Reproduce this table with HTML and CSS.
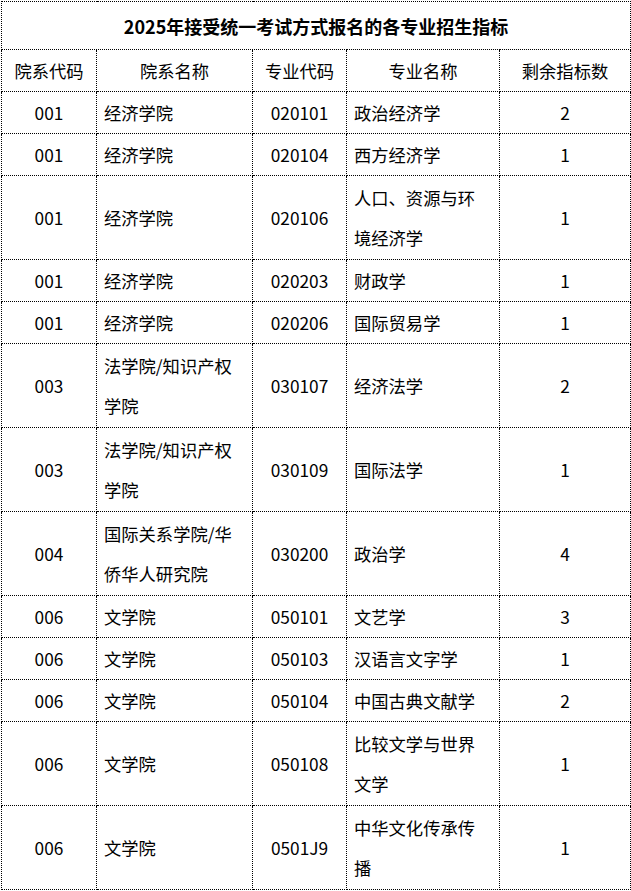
FILE: index.html
```html
<!DOCTYPE html>
<html lang="zh">
<head>
<meta charset="utf-8">
<link rel="stylesheet" href="styles.css">
</head>
<body>
<table class="quota">
  <colgroup>
    <col class="c1"><col class="c2"><col class="c3"><col class="c4"><col class="c5">
  </colgroup>
  <tr class="title-row"><td colspan="5" class="title">2025年接受统一考试方式报名的各专业招生指标</td></tr>
  <tr class="r1 head"><td>院系代码</td><td>院系名称</td><td>专业代码</td><td>专业名称</td><td>剩余指标数</td></tr>
  <tr class="r1"><td class="ctr">001</td><td class="lft">经济学院</td><td class="ctr">020101</td><td class="lft">政治经济学</td><td class="ctr">2</td></tr>
  <tr class="r1"><td class="ctr">001</td><td class="lft">经济学院</td><td class="ctr">020104</td><td class="lft">西方经济学</td><td class="ctr">1</td></tr>
  <tr class="r2"><td class="ctr">001</td><td class="lft">经济学院</td><td class="ctr">020106</td><td class="lft">人口、资源与环<br>境经济学</td><td class="ctr">1</td></tr>
  <tr class="r1"><td class="ctr">001</td><td class="lft">经济学院</td><td class="ctr">020203</td><td class="lft">财政学</td><td class="ctr">1</td></tr>
  <tr class="r1"><td class="ctr">001</td><td class="lft">经济学院</td><td class="ctr">020206</td><td class="lft">国际贸易学</td><td class="ctr">1</td></tr>
  <tr class="r2"><td class="ctr">003</td><td class="lft">法学院/知识产权<br>学院</td><td class="ctr">030107</td><td class="lft">经济法学</td><td class="ctr">2</td></tr>
  <tr class="r2"><td class="ctr">003</td><td class="lft">法学院/知识产权<br>学院</td><td class="ctr">030109</td><td class="lft">国际法学</td><td class="ctr">1</td></tr>
  <tr class="r2"><td class="ctr">004</td><td class="lft">国际关系学院/华<br>侨华人研究院</td><td class="ctr">030200</td><td class="lft">政治学</td><td class="ctr">4</td></tr>
  <tr class="r1"><td class="ctr">006</td><td class="lft">文学院</td><td class="ctr">050101</td><td class="lft">文艺学</td><td class="ctr">3</td></tr>
  <tr class="r1"><td class="ctr">006</td><td class="lft">文学院</td><td class="ctr">050103</td><td class="lft">汉语言文字学</td><td class="ctr">1</td></tr>
  <tr class="r1"><td class="ctr">006</td><td class="lft">文学院</td><td class="ctr">050104</td><td class="lft">中国古典文献学</td><td class="ctr">2</td></tr>
  <tr class="r2"><td class="ctr">006</td><td class="lft">文学院</td><td class="ctr">050108</td><td class="lft">比较文学与世界<br>文学</td><td class="ctr">1</td></tr>
  <tr class="r2"><td class="ctr">006</td><td class="lft">文学院</td><td class="ctr">0501J9</td><td class="lft">中华文化传承传<br>播</td><td class="ctr">1</td></tr>
</table>
</body>
</html>
```
FILE: styles.css
```css
html, body {
  margin: 0;
  padding: 0;
  background: #ffffff;
}

body {
  padding: 1px 0 0 1px;
  font-family: "Noto Sans CJK SC", "Noto Sans", sans-serif;
  color: #000000;
}

.quota {
  border-collapse: collapse;
  table-layout: fixed;
  width: 629px;
  font-size: 17.3px;
}

.c1 { width: 95px; }
.c2 { width: 156px; }
.c3 { width: 94px; }
.c4 { width: 153px; }
.c5 { width: 131px; }

.quota td {
  border: 1px dotted #000000;
  padding: 0;
  line-height: 40px;
  vertical-align: middle;
  white-space: nowrap;
}

.title-row td {
  height: 47px;
  text-align: center;
  font-weight: bold;
  font-size: 18px;
}

.r1 td { height: 41px; }
.r2 td { height: 83px; }

.head td { text-align: center; }

.ctr { text-align: center; }
.lft { text-align: left; padding-left: 7px !important; }
```
